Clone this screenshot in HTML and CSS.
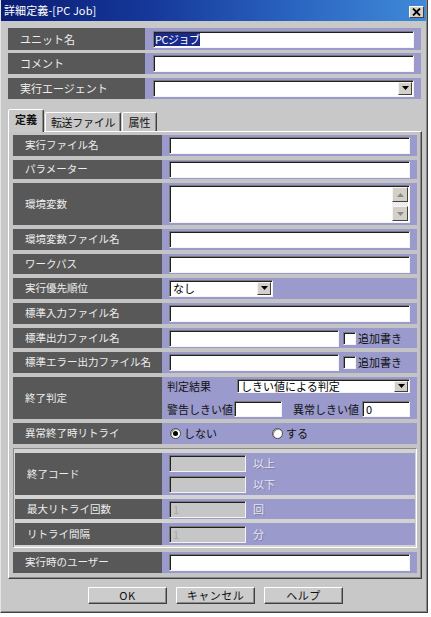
FILE: index.html
```html
<!DOCTYPE html>
<html lang="ja">
<head>
<meta charset="utf-8">
<link rel="stylesheet" href="styles.css">
</head>
<body>
<div class="window">
  <div class="titlebar">
    <span class="title">詳細定義-[PC Job]</span>
    <span class="close"><svg width="9" height="8" viewBox="0 0 9 8"><path d="M1 0.5 L8 7.5 M8 0.5 L1 7.5" stroke="#000" stroke-width="1.8"/></svg></span>
  </div>
  <div class="content">
    <div class="top">
      <div class="row h22"><div class="lbl">ユニット名</div><div class="val"><div class="input"><span class="hl">PCジョブ</span></div></div></div>
      <div class="row"><div class="lbl">コメント</div><div class="val"><div class="input"></div></div></div>
      <div class="row"><div class="lbl">実行エージェント</div><div class="val"><div class="input combo"><span class="ddbtn"><svg width="7" height="5" viewBox="0 0 7 5"><path d="M0 0 H7 L3.5 4 Z" fill="#000"/></svg></span></div></div></div>
    </div>

    <div class="tabs">
      <div class="tab active t1">定義</div>
      <div class="tab t2">転送ファイル</div>
      <div class="tab t3">属性</div>
    </div>

    <div class="panel">
      <div class="row"><div class="lbl">実行ファイル名</div><div class="val"><div class="input"></div></div></div>
      <div class="row h19"><div class="lbl">パラメーター</div><div class="val"><div class="input"></div></div></div>
      <div class="row h42"><div class="lbl">環境変数</div><div class="val">
        <div class="input textarea">
          <div class="scrollbar">
            <span class="sbtn"><svg width="7" height="4" viewBox="0 0 7 4"><path d="M0 4 H7 L3.5 0 Z" fill="#8a8a8a"/></svg></span>
            <span class="track"></span>
            <span class="sbtn"><svg width="7" height="4" viewBox="0 0 7 4"><path d="M0 0 H7 L3.5 4 Z" fill="#8a8a8a"/></svg></span>
          </div>
        </div>
      </div></div>
      <div class="row"><div class="lbl">環境変数ファイル名</div><div class="val"><div class="input"></div></div></div>
      <div class="row h20"><div class="lbl">ワークパス</div><div class="val"><div class="input"></div></div></div>
      <div class="row"><div class="lbl">実行優先順位</div><div class="val">
        <div class="input combo prio"><span class="itext">なし</span><span class="ddbtn"><svg width="7" height="5" viewBox="0 0 7 5"><path d="M0 0 H7 L3.5 4 Z" fill="#000"/></svg></span></div>
      </div></div>
      <div class="row"><div class="lbl">標準入力ファイル名</div><div class="val"><div class="input"></div></div></div>
      <div class="row h20"><div class="lbl">標準出力ファイル名</div><div class="val">
        <div class="input short"></div><span class="check"></span><span class="dtext">追加書き</span>
      </div></div>
      <div class="row"><div class="lbl">標準エラー出力ファイル名</div><div class="val">
        <div class="input short"></div><span class="check"></span><span class="dtext">追加書き</span>
      </div></div>
      <div class="row h42"><div class="lbl">終了判定</div><div class="val judge">
        <div class="jline l1">
          <span class="dtext jl">判定結果</span>
          <div class="input combo jsel"><span class="itext">しきい値による判定</span><span class="ddbtn"><svg width="7" height="5" viewBox="0 0 7 5"><path d="M0 0 H7 L3.5 4 Z" fill="#000"/></svg></span></div>
        </div>
        <div class="jline l2">
          <span class="dtext">警告しきい値</span>
          <div class="input warn"></div>
          <span class="dtext err">異常しきい値</span>
          <div class="input errv"><span class="itext">0</span></div>
        </div>
      </div></div>
      <div class="row"><div class="lbl">異常終了時リトライ</div><div class="val radios">
        <span class="radio on"></span><span class="dtext r1">しない</span>
        <span class="radio"></span><span class="dtext">する</span>
      </div></div>

      <div class="subbox">
        <div class="row h42"><div class="lbl">終了コード</div><div class="val codes">
          <div class="cline"><div class="input dis"></div><span class="gtext">以上</span></div>
          <div class="cline"><div class="input dis"></div><span class="gtext">以下</span></div>
        </div></div>
        <div class="row h20"><div class="lbl">最大リトライ回数</div><div class="val">
          <div class="input dis"><span class="itext">1</span></div><span class="gtext">回</span>
        </div></div>
        <div class="row h22"><div class="lbl">リトライ間隔</div><div class="val">
          <div class="input dis"><span class="itext">1</span></div><span class="gtext">分</span>
        </div></div>
      </div>

      <div class="row"><div class="lbl">実行時のユーザー</div><div class="val"><div class="input"></div></div></div>
    </div>

    <div class="buttons">
      <div class="btn">OK</div>
      <div class="btn">キャンセル</div>
      <div class="btn">ヘルプ</div>
    </div>
  </div>
</div>
</body>
</html>
```

FILE: styles.css
```css
html, body {
  margin: 0;
  padding: 0;
  background: #ffffff;
}

body {
  font-family: "Noto Sans CJK JP", "Noto Sans", sans-serif;
  font-size: 11px;
  line-height: 1;
}

.window {
  width: 428px;
  height: 613px;
  box-sizing: border-box;
  background: #c8c8c8;
  border-left: 1px solid #e4e4e4;
  border-right: 1px solid #404040;
  border-bottom: 1px solid #404040;
  box-shadow: inset -1px -1px 0 #8a8a8a;
  display: flex;
  flex-direction: column;
}

.titlebar {
  height: 21px;
  flex: none;
  box-sizing: border-box;
  margin-right: 1px;
  background: linear-gradient(to right, #0b1c74 0%, #15389a 35%, #2b66c2 70%, #3f8ad8 100%);
  display: flex;
  align-items: center;
  justify-content: space-between;
  padding: 0 2px 0 3px;
}

.title {
  color: #ffffff;
  font-size: 11px;
  letter-spacing: 0.1px;
}

.close {
  width: 15px;
  height: 12px;
  box-sizing: border-box;
  background: #d4d0c8;
  border: 1px solid;
  border-color: #ffffff #404040 #404040 #ffffff;
  display: flex;
  align-items: center;
  justify-content: center;
  margin-top: 2px;
}

.content {
  flex: 1;
  display: flex;
  flex-direction: column;
  padding: 7px 0 0 7px;
}

/* rows */
.row {
  display: flex;
  height: 21px;
  flex: none;
}
.row.h19 { height: 19px; }
.row.h20 { height: 20px; }
.row.h22 { height: 22px; }
.row.h42 { height: 42px; }

.lbl {
  width: 149px;
  flex: none;
  box-sizing: border-box;
  background: #585858;
  color: #eeeeee;
  display: flex;
  align-items: center;
  padding-left: 12px;
  font-size: 10.5px;
  white-space: nowrap;
}

.val {
  flex: 1;
  background: #9a9acc;
  display: flex;
  align-items: center;
  padding: 0 7px 0 7px;
  min-width: 0;
}

.top {
  width: 413px;
  display: flex;
  flex-direction: column;
  gap: 3px;
}
.top .row + .row + .row { margin-top: 1px; }
.top .lbl { width: 137px; font-size: 11px; }
.top .val { padding: 0 7px 0 8px; }

/* inputs */
.input {
  flex: 1;
  height: 17px;
  box-sizing: border-box;
  background: #ffffff;
  border: 1px solid;
  border-color: #7a7a7a #f4f4f4 #f4f4f4 #7a7a7a;
  box-shadow: inset 1px 1px 0 #202020;
  display: flex;
  align-items: center;
  position: relative;
  min-width: 0;
}

.hl {
  margin-left: 1px;
  background: #1a2a8c;
  color: #ffffff;
  font-size: 11px;
  padding: 1px 1px 1px 0;
  letter-spacing: -0.5px;
}

.itext {
  padding-left: 3px;
  color: #000000;
  font-size: 11px;
}

.combo {
  justify-content: space-between;
  padding-right: 1px;
}

.ddbtn {
  margin-left: auto;
  width: 14px;
  height: 13px;
  box-sizing: border-box;
  background: #d4d0c8;
  border: 1px solid;
  border-color: #f4f4f4 #404040 #404040 #f4f4f4;
  display: flex;
  align-items: center;
  justify-content: center;
}

.prio {
  flex: none;
  width: 104px;
}

.textarea {
  height: 38px;
  align-items: stretch;
  justify-content: flex-end;
  padding: 1px 1px 1px 0;
}

.scrollbar {
  width: 16px;
  display: flex;
  flex-direction: column;
}
.scrollbar .sbtn {
  height: 15px;
  box-sizing: border-box;
  background: #d4d0c8;
  border: 1px solid;
  border-color: #f4f4f4 #404040 #404040 #f4f4f4;
  display: flex;
  align-items: center;
  justify-content: center;
}
.scrollbar .track {
  flex: 1;
  background: repeating-conic-gradient(#e6e6e6 0 25%, #f6f6f6 0 50%) 0 0 / 2px 2px;
}

.short {
  flex: none;
  width: 170px;
}

.check {
  width: 13px;
  height: 13px;
  box-sizing: border-box;
  background: #ffffff;
  border: 1px solid;
  border-color: #7a7a7a #f4f4f4 #f4f4f4 #7a7a7a;
  box-shadow: inset 1px 1px 0 #202020;
  margin-left: 4px;
  flex: none;
}

.dtext {
  color: #111111;
  font-size: 11px;
  white-space: nowrap;
}
.check + .dtext { margin-left: 2px; }

/* 終了判定 */
.judge {
  flex-direction: column;
  align-items: stretch;
  justify-content: center;
  padding-left: 5px;
  gap: 8px;
}
.jline {
  display: flex;
  align-items: center;
}
.jline.l1 { height: 14px; }
.jline.l2 { height: 16px; }
.jl { width: 70px; flex: none; }
.jsel {
  height: 14px;
  border-width: 1px;
}
.jsel .ddbtn { height: 11px; }
.warn {
  flex: none;
  width: 48px;
  height: 16px;
  margin-left: 1px;
}
.err { margin-left: 11px; margin-right: 3px; }
.errv { height: 16px; }

/* radios */
.radios { padding-left: 8px; }
.radio {
  width: 11px;
  height: 11px;
  box-sizing: border-box;
  border-radius: 50%;
  background: #ffffff;
  border: 1px solid #4a4a4a;
  box-shadow: inset 1px 1px 0 #9a9a9a;
  margin-right: 3px;
  position: relative;
  flex: none;
}
.radio.on::after {
  content: "";
  position: absolute;
  left: 2px;
  top: 2px;
  width: 5px;
  height: 5px;
  border-radius: 50%;
  background: #000000;
}
.r1 { width: 88px; }

/* tabs */
.tabs {
  height: 22px;
  display: flex;
  align-items: flex-end;
  margin-top: 10px;
  flex: none;
}
.tab {
  height: 19px;
  box-sizing: border-box;
  border: 1px solid;
  border-bottom: none;
  border-color: #ffffff #404040 transparent #ffffff;
  border-radius: 2px 2px 0 0;
  box-shadow: inset -1px 0 0 #8a8a8a;
  display: flex;
  align-items: center;
  justify-content: center;
  color: #111111;
  font-size: 11px;
  background: #c8c8c8;
}
.tab.active {
  height: 23px;
  margin-bottom: -1px;
  font-weight: bold;
  position: relative;
  z-index: 1;
  padding-bottom: 3px;
}
.t1 { width: 36px; }
.t2 { width: 76px; margin-left: 1px; letter-spacing: -0.3px; }
.t3 { width: 35px; margin-left: 1px; }

/* panel */
.panel {
  width: 414px;
  box-sizing: border-box;
  border: 1px solid;
  border-color: #ffffff #404040 #404040 #ffffff;
  box-shadow: inset -1px -1px 0 #8a8a8a;
  padding: 3px 4px 5px 4px;
  display: flex;
  flex-direction: column;
  gap: 4px;
  background: #c4c4c4;
}

.subbox {
  height: 100px;
  box-sizing: border-box;
  border: 1px solid;
  border-color: #8a8a8a #ffffff #ffffff #8a8a8a;
  background: #d2d2d2;
  padding: 4px 1px 2px 1px;
  display: flex;
  flex-direction: column;
  gap: 4px;
  flex: none;
}
.subbox .lbl { width: 147px; }

.codes {
  flex-direction: column;
  align-items: flex-start;
  justify-content: center;
  gap: 4px;
}
.cline {
  display: flex;
  align-items: center;
}
.input.dis {
  flex: none;
  width: 77px;
  background: #c6c6c6;
}
.input.dis .itext { color: #a8a8a8; }
.gtext {
  margin-left: 7px;
  color: #e4e4f0;
  font-size: 11px;
  text-shadow: 1px 1px 0 #8080a8;
}

/* buttons */
.buttons {
  display: flex;
  gap: 9px;
  margin-top: 8px;
  padding-left: 80px;
}
.btn {
  width: 79px;
  height: 17px;
  box-sizing: border-box;
  background: #cccccc;
  border: 1px solid;
  border-color: #ffffff #404040 #404040 #ffffff;
  box-shadow: inset -1px -1px 0 #8a8a8a;
  display: flex;
  align-items: center;
  justify-content: center;
  color: #111111;
  font-size: 11px;
  letter-spacing: 0.5px;
}
```
